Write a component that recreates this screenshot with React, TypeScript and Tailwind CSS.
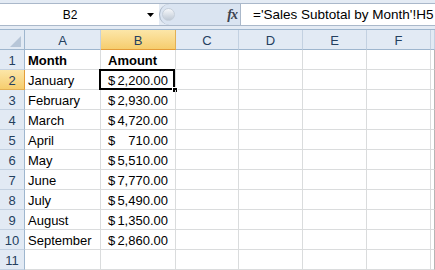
import React from 'react';

const rows: { month: string; amount: string; bold?: boolean }[] = [
  { month: 'Month', amount: 'Amount', bold: true },
  { month: 'January', amount: '2,200.00' },
  { month: 'February', amount: '2,930.00' },
  { month: 'March', amount: '4,720.00' },
  { month: 'April', amount: '710.00' },
  { month: 'May', amount: '5,510.00' },
  { month: 'June', amount: '7,770.00' },
  { month: 'July', amount: '5,490.00' },
  { month: 'August', amount: '1,350.00' },
  { month: 'September', amount: '2,860.00' },
  { month: '', amount: '' },
];

const cols = ['A', 'B', 'C', 'D', 'E', 'F', ''];

export default function App() {
  return (
    <div className="w-[435px] h-[270px] overflow-hidden bg-white font-['Liberation_Sans',Arial,sans-serif] text-black">
      {/* Formula bar */}
      <div className="h-[30px] bg-[#e4ebf4] pt-[3px] border-b border-[#9eb6ce]">
        <div className="flex h-[23px] border-y border-[#aab8ca]">
          <div className="relative w-[159px] bg-white">
            <div className="w-[140px] text-center text-[12px] leading-[21px] pt-[1px]">B2</div>
            <svg className="absolute left-[147px] top-[9px]" width="7" height="4" viewBox="0 0 7 4">
              <polygon points="0,0 7,0 3.5,4" fill="#000" />
            </svg>
          </div>
          <div className="relative flex w-[81px] items-center justify-end rounded-l-[11px] border-l border-[#a9b5c5] bg-[#dae4f1] pr-[3px]">
            <div className="absolute left-[2px] top-[4px] h-[13px] w-[13px] rounded-full bg-gradient-to-b from-[#f6f8fb] to-[#bfc9d5] border border-[#c6cfda]" />
            <span className="font-['Liberation_Serif',serif] italic font-bold text-[14px] text-[#3b4350] leading-none tracking-[-1px]">fx</span>
          </div>
          <div className="flex-1 bg-white border-l border-[#aab8ca] pl-[12px] text-[13.5px] leading-[21px] whitespace-nowrap overflow-hidden">
            ='Sales Subtotal by Month'!H5
          </div>
        </div>
      </div>

      {/* Sheet grid */}
      <div className="grid grid-cols-[25px_76px_75px_63px_64px_64px_64px_4px] text-[13px]">
        {/* Column headers */}
        <div className="relative h-[20px] bg-[#e2eaf4] border-r border-b border-[#9eb6ce]">
          <svg className="absolute left-[10px] top-[6px]" width="11" height="11" viewBox="0 0 11 11">
            <polygon points="11,0 11,11 0,11" fill="#b7c6d8" />
          </svg>
        </div>
        {cols.map((c, i) => (
          <div
            key={i}
            className={
              c === 'B'
                ? 'h-[20px] bg-gradient-to-b from-[#fce6a8] to-[#f6cd6d] border-r border-b border-r-[#e2b055] border-b-[#e39c3a] text-center leading-[19px] pt-px text-[#24405f]'
                : 'h-[20px] bg-[#e2eaf4] border-r border-b border-r-[#c3d1e1] border-b-[#9eb6ce] text-center leading-[19px] pt-px text-[#24405f]'
            }
          >
            {c}
          </div>
        ))}

        {rows.map((r, idx) => {
          const n = idx + 1;
          const sel = n === 2;
          return (
            <React.Fragment key={n}>
              <div
                className={
                  sel
                    ? 'h-[20px] bg-gradient-to-b from-[#fce6a8] to-[#f6cd6d] border-r border-b border-r-[#e39c3a] border-b-[#e2b055] text-center leading-[19px] pt-px text-[#24405f]'
                    : 'h-[20px] bg-[#e2eaf4] border-r border-b border-r-[#9eb6ce] border-b-[#c3d1e1] text-center leading-[19px] pt-px text-[#24405f]'
                }
              >
                {n}
              </div>
              <div className={`h-[20px] border-r border-b border-[#dadcdd] pl-[3px] leading-[19px] pt-px whitespace-nowrap ${r.bold ? 'font-bold' : ''}`}>
                {r.month}
              </div>
              <div className="relative h-[20px] border-r border-b border-[#dadcdd] leading-[19px] pt-px whitespace-nowrap">
                {r.bold ? (
                  <div className="pl-[7px] font-bold">{r.amount}</div>
                ) : r.amount ? (
                  <div className="flex justify-between pl-[7px] pr-[7px]">
                    <span>$</span>
                    <span>{r.amount}</span>
                  </div>
                ) : null}
                {sel && (
                  <>
                    <div className="absolute left-[-2px] top-[-1px] w-[76px] h-[21px] border-2 border-black" />
                    <div className="absolute left-[71px] top-[17px] w-[6px] h-[6px] bg-black border border-white" />
                  </>
                )}
              </div>
              <div className="h-[20px] border-r border-b border-[#dadcdd]" />
              <div className="h-[20px] border-r border-b border-[#dadcdd]" />
              <div className="h-[20px] border-r border-b border-[#dadcdd]" />
              <div className="h-[20px] border-r border-b border-[#dadcdd]" />
              <div className="h-[20px] border-r border-b border-r-[#b5b5b5] border-b-[#dadcdd]" />
            </React.Fragment>
          );
        })}
      </div>
    </div>
  );
}
